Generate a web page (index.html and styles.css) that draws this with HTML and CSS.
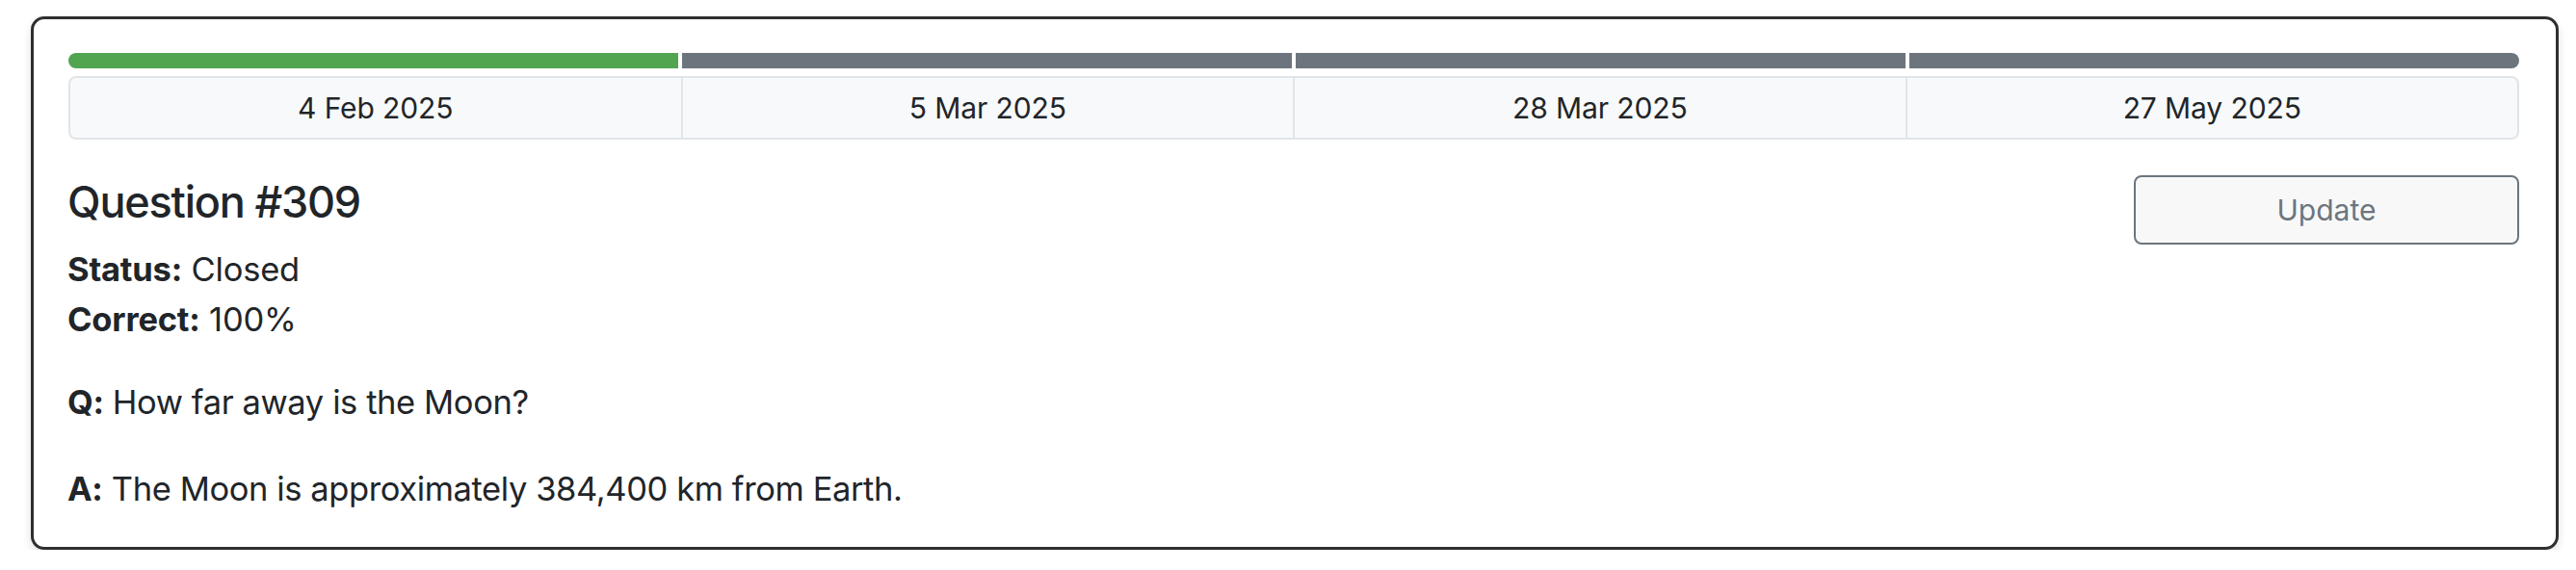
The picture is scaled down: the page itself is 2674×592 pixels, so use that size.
FILE: index.html
```html
<!DOCTYPE html>
<html lang="en">
<head>
<meta charset="utf-8">
<title>Question #309</title>
<link rel="stylesheet" href="styles.css">
</head>
<body>
<div class="card">
  <div class="timeline">
    <div class="seg seg-done"></div>
    <div class="seg"></div>
    <div class="seg"></div>
    <div class="seg"></div>
  </div>
  <div class="dates">
    <div class="date">4 Feb 2025</div>
    <div class="date">5 Mar 2025</div>
    <div class="date">28 Mar 2025</div>
    <div class="date">27 May 2025</div>
  </div>
  <div class="head">
    <div class="info">
      <h2 class="title">Question #309</h2>
      <div class="line"><b>Status:</b> Closed</div>
      <div class="line"><b>Correct:</b> 100%</div>
    </div>
    <button class="btn" type="button">Update</button>
  </div>
  <p class="qa"><b>Q:</b> How far away is the Moon?</p>
  <p class="qa"><b>A:</b> The Moon is approximately 384,400 km from Earth.</p>
</div>
</body>
</html>
```
FILE: styles.css
```css
html, body {
  margin: 0;
  background: #ffffff;
}
body {
  padding: 17px 18px 0 32px;
  font-family: Inter, "Noto Sans", sans-serif;
  color: #212529;
}
.card {
  border: 3px solid #2f2f2f;
  border-radius: 14px;
  box-shadow: 0 5px 10px rgba(0, 0, 0, 0.12);
  padding: 35px 38px 34px 35px;
  background: #fff;
}
.timeline {
  display: grid;
  grid-template-columns: repeat(4, 1fr);
  gap: 4px;
  height: 16px;
  margin-left: 1px;
  border-radius: 8px;
  overflow: hidden;
}
.seg {
  background: #6c757d;
}
.seg-done {
  background: #51a551;
}
.dates {
  margin-top: 8px;
  margin-left: 1px;
  display: grid;
  grid-template-columns: repeat(4, 1fr);
  gap: 2px;
  background: #e1e4e8;
  border: 2px solid #e1e4e8;
  border-radius: 8px;
  overflow: hidden;
}
.date {
  background: #f8f9fa;
  height: 62px;
  display: flex;
  align-items: center;
  justify-content: center;
  font-size: 30px;
  letter-spacing: -0.1px;
}
.head {
  margin-top: 37px;
  display: flex;
  justify-content: space-between;
  align-items: flex-start;
}
.title {
  margin: 0 0 17px;
  font-size: 45px;
  font-weight: 500;
  line-height: 55px;
  letter-spacing: -1.2px;
}
.line {
  font-size: 34.5px;
  line-height: 52px;
  letter-spacing: -0.2px;
}
.btn {
  width: 400px;
  height: 72px;
  border: 2px solid #6c757d;
  border-radius: 8px;
  background: #f8f8f8;
  color: #6c757d;
  font-family: inherit;
  font-size: 30px;
}
.qa {
  margin: 34px 0 0;
  font-size: 34.5px;
  line-height: 52px;
  letter-spacing: -0.4px;
}
.qa + .qa {
  margin-top: 38px;
}
b {
  font-weight: 700;
}
```
